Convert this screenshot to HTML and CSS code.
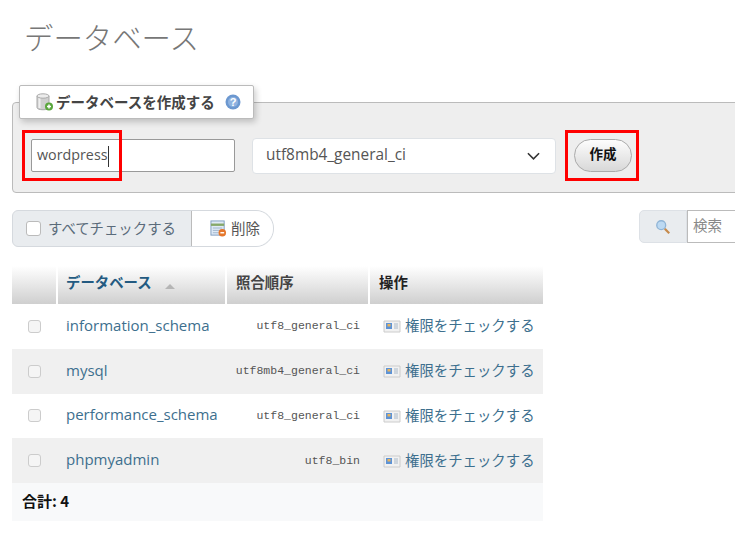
FILE: index.html
```html
<!DOCTYPE html>
<html lang="ja">
<head>
<meta charset="utf-8">
<title>データベース</title>
<link rel="stylesheet" href="styles.css">
</head>
<body>
<main class="page">
  <h1 class="title">データベース</h1>

  <form class="create-panel">
    <div class="legend">
      <svg class="ico-db" viewBox="0 0 18 18" width="18" height="18"><path d="M1 3v11.500c0 3 12 3 12 0V3z" fill="#cfcfcf" stroke="#a8a8a8"/><path d="M3.500 5v10" stroke="#f0f0f0" stroke-width="2"/><ellipse cx="7" cy="3" rx="6" ry="2.200" fill="#ececec" stroke="#aaa"/><circle cx="13" cy="13.500" r="4" fill="#5aa63c"/><path d="M11 13.500h4M13 11.500v4" stroke="#fff" stroke-width="1.500"/></svg>
      <span class="legend-text">データベースを作成する</span>
      <svg class="ico-help" viewBox="0 0 16 16" width="16" height="16"><circle cx="8" cy="8" r="7.500" fill="#6c98d0"/><circle cx="8" cy="8" r="5" fill="#8fb3e0"/><text x="8" y="11.500" text-anchor="middle" class="help-q">?</text></svg>
    </div>
    <div class="create-row">
      <div class="name-input">wordpress<span class="caret"></span></div>
      <div class="select"><span class="select-text">utf8mb4_general_ci</span>
        <svg viewBox="0 0 14 8" width="13" height="8"><path d="M1 1l6 6 6-6" fill="none" stroke="#333" stroke-width="1.700"/></svg>
      </div>
      <div class="btn-create">作成</div>
    </div>
    <span class="mark mark-name"></span>
    <span class="mark mark-btn"></span>
  </form>

  <div class="toolbar">
    <div class="bulk">
      <label class="check-all"><span class="box"></span>すべてチェックする</label>
      <div class="del">
        <svg viewBox="0 0 18 18" width="17" height="17"><rect x="1" y="1" width="14" height="15" fill="#dfeaf6" stroke="#7d9cc0"/><path d="M1 5h14" stroke="#86a86a" stroke-width="2.500"/><path d="M3 8.500h10M3 11h10M3 13.500h6" stroke="#9db3cb"/><circle cx="13" cy="13.500" r="4" fill="#e5772b"/><path d="M11 13.500h4" stroke="#fff" stroke-width="1.500"/></svg>
        <span class="del-text">削除</span>
      </div>
    </div>
    <div class="search">
      <div class="search-icon"><svg viewBox="0 0 18 18" width="16" height="16"><circle cx="7" cy="7" r="5" fill="#bcd9f2" stroke="#8fb4d6" stroke-width="1.500"/><path d="M11 11l5 5" stroke="#c68a4c" stroke-width="2.500"/></svg></div>
      <div class="search-input">検索</div>
    </div>
  </div>

  <table class="db-table">
    <colgroup><col class="c1"><col class="c2"><col class="c3"><col class="c4"></colgroup>
    <thead>
      <tr><th></th><th class="th-link th-db">データベース<span class="sort"></span></th><th class="th-link th-coll">照合順序</th><th>操作</th></tr>
    </thead>
    <tbody>
      <tr><td class="td-check"><span class="rowbox"></span></td><td><a class="link">information_schema</a></td><td class="coll">utf8_general_ci</td><td><a class="link priv"><svg class="ico-priv" viewBox="0 0 18 14" width="18" height="14"><path d="M1 2h16v11H1z" fill="#f1f1f1" stroke="#ccc"/><rect x="3" y="4" width="6" height="6" fill="#5d93d6"/><rect x="4.500" y="5" width="3" height="2.500" fill="#e9b35b"/><path d="M11 5h4M11 7h4M11 9h4" stroke="#a8b8c8"/></svg>権限をチェックする</a></td></tr>
      <tr><td class="td-check"><span class="rowbox"></span></td><td><a class="link">mysql</a></td><td class="coll">utf8mb4_general_ci</td><td><a class="link priv"><svg class="ico-priv" viewBox="0 0 18 14" width="18" height="14"><path d="M1 2h16v11H1z" fill="#f1f1f1" stroke="#ccc"/><rect x="3" y="4" width="6" height="6" fill="#5d93d6"/><rect x="4.500" y="5" width="3" height="2.500" fill="#e9b35b"/><path d="M11 5h4M11 7h4M11 9h4" stroke="#a8b8c8"/></svg>権限をチェックする</a></td></tr>
      <tr><td class="td-check"><span class="rowbox"></span></td><td><a class="link">performance_schema</a></td><td class="coll">utf8_general_ci</td><td><a class="link priv"><svg class="ico-priv" viewBox="0 0 18 14" width="18" height="14"><path d="M1 2h16v11H1z" fill="#f1f1f1" stroke="#ccc"/><rect x="3" y="4" width="6" height="6" fill="#5d93d6"/><rect x="4.500" y="5" width="3" height="2.500" fill="#e9b35b"/><path d="M11 5h4M11 7h4M11 9h4" stroke="#a8b8c8"/></svg>権限をチェックする</a></td></tr>
      <tr><td class="td-check"><span class="rowbox"></span></td><td><a class="link">phpmyadmin</a></td><td class="coll">utf8_bin</td><td><a class="link priv"><svg class="ico-priv" viewBox="0 0 18 14" width="18" height="14"><path d="M1 2h16v11H1z" fill="#f1f1f1" stroke="#ccc"/><rect x="3" y="4" width="6" height="6" fill="#5d93d6"/><rect x="4.500" y="5" width="3" height="2.500" fill="#e9b35b"/><path d="M11 5h4M11 7h4M11 9h4" stroke="#a8b8c8"/></svg>権限をチェックする</a></td></tr>
    </tbody>
    <tfoot>
      <tr><td colspan="4" class="total">合計: 4</td></tr>
    </tfoot>
  </table>
</main>
</body>
</html>
```

FILE: styles.css
```css
html, body {
  margin: 0;
  padding: 0;
  background: #fff;
  overflow: hidden;
  height: 539px;
}
body {
  font-family: "Open Sans", "Noto Sans CJK JP", sans-serif;
  color: #444;
  font-size: 14px;
}
.page {
  width: 780px;
  padding: 13px 0 0 12px;
}
.title {
  margin: 0 0 0 12px;
  height: 46px;
  font-size: 29.400px;
  line-height: 46px;
  font-weight: 300;
  color: #777;
  font-family: "Noto Sans CJK JP", sans-serif;
}
.create-panel {
  position: relative;
  box-sizing: border-box;
  margin-top: 43px;
  height: 91px;
  background: #eee;
  border: 1px solid #bbb;
  border-radius: 4px;
  padding: 35px 0 0 18px;
}
.legend {
  position: absolute;
  left: 6px;
  top: -18px;
  box-sizing: border-box;
  width: 235px;
  height: 34px;
  background: #fff;
  border: 1px solid #bbb;
  border-radius: 2px;
  box-shadow: 2px 3px 6px rgba(0, 0, 0, .2);
  display: flex;
  align-items: center;
  padding-left: 16px;
  color: #444;
}
.legend-text {
  font-size: 14.500px;
  font-weight: 700;
  margin-left: 2px;
  padding-bottom: 2px;
  white-space: nowrap;
  color: #444;
  font-family: "Noto Sans CJK JP", sans-serif;
}
.ico-help {
  margin-left: 10px;
}
.help-q {
  font: 700 11px "Liberation Sans", sans-serif;
  fill: #fff;
}
.create-row {
  display: flex;
  align-items: flex-start;
  height: 36px;
}
.name-input {
  box-sizing: border-box;
  width: 204px;
  height: 33px;
  margin-top: 1px;
  background: #fff;
  border: 1px solid #999;
  border-radius: 2px;
  line-height: 29px;
  padding-left: 5px;
  font-size: 14.300px;
  color: #555;
}
.caret {
  display: inline-block;
  width: 1px;
  height: 21px;
  background: #333;
  vertical-align: middle;
}
.select {
  box-sizing: border-box;
  width: 304px;
  height: 36px;
  margin-left: 17px;
  background: #fff;
  border: 1px solid #dee2e6;
  border-radius: 4px;
  display: flex;
  align-items: center;
  justify-content: space-between;
  padding: 0 15px 0 13px;
  font-size: 15.400px;
  color: #555;
}
.select-text {
  padding-bottom: 3px;
}
.btn-create {
  box-sizing: border-box;
  width: 58px;
  height: 33px;
  margin: 1px 0 0 18px;
  border: 1px solid #aaa;
  border-radius: 17px;
  background: linear-gradient(#fdfdfd, #d8d8d8);
  color: #111;
  text-align: center;
  line-height: 27px;
  font-size: 13.500px;
  font-weight: 700;
  font-family: "Noto Sans CJK JP", sans-serif;
}
.mark {
  position: absolute;
  box-sizing: border-box;
  border: 3px solid #f00;
}
.mark-name {
  left: 9px;
  top: 27px;
  width: 100px;
  height: 51px;
}
.mark-btn {
  left: 552px;
  top: 27px;
  width: 74px;
  height: 51px;
}
.toolbar {
  display: flex;
  justify-content: space-between;
  margin-top: 17px;
  height: 37px;
}
.bulk {
  display: flex;
  box-sizing: border-box;
  height: 37px;
  width: 262px;
  border: 1px solid #d5d9de;
  border-radius: 6px 18px 18px 6px;
  background: #e9ecef;
}
.check-all {
  display: flex;
  align-items: center;
  width: 178px;
  padding: 0 0 3px 13px;
  box-sizing: border-box;
  color: #5a6b7a;
  font-size: 14.400px;
  white-space: nowrap;
  font-family: "Noto Sans CJK JP", sans-serif;
}
.box {
  box-sizing: border-box;
  width: 15px;
  height: 15px;
  margin: 3px 7px 0 0;
  background: #fff;
  border: 1px solid #bbb;
  border-radius: 3px;
}
.del {
  flex: 1;
  display: flex;
  align-items: center;
  gap: 4px;
  padding-left: 18px;
  background: #fff;
  border-left: 1px solid #bbb;
  border-radius: 0 18px 18px 0;
  color: #555;
  font-size: 14.500px;
  font-family: "Noto Sans CJK JP", sans-serif;
}
.del-text {
  padding-bottom: 3px;
}
.search {
  display: flex;
  height: 33px;
  width: 141px;
  margin-right: 12px;
}
.search-icon {
  box-sizing: border-box;
  width: 48px;
  background: #e9ecef;
  border: 1px solid #dde1e6;
  border-radius: 5px 0 0 5px;
  display: flex;
  align-items: center;
  justify-content: center;
}
.search-input {
  flex: 1;
  box-sizing: border-box;
  border: 1px solid #bbb;
  background: #fff;
  padding-left: 5px;
  line-height: 28px;
  font-size: 14.500px;
  color: #888;
  font-family: "Noto Sans CJK JP", sans-serif;
}
.db-table {
  margin-top: 19px;
  width: 531px;
  table-layout: fixed;
  border-collapse: collapse;
}
.c1 { width: 45px; }
.c2 { width: 169px; }
.c3 { width: 143px; }
.c4 { width: 174px; }
th {
  box-sizing: border-box;
  height: 38px;
  padding: 0 0 7px 9px;
  text-align: left;
  background: linear-gradient(#fff, #cfcfcf);
  border-left: 2px solid #fff;
  font-size: 14.400px;
  font-weight: 700;
  color: #222;
  font-family: "Noto Sans CJK JP", sans-serif;
}
th:first-child { border-left: 0; }
.th-link { color: #235a81; }
.th-db { padding-left: 8px; }
.th-coll { color: #444; }
.sort {
  display: inline-block;
  margin: 5px 0 0 13px;
  vertical-align: middle;
  border: 5px solid transparent;
  border-top: 0;
  border-bottom: 5px solid #b5b5b5;
}
td {
  box-sizing: border-box;
  height: 44.750px;
  padding: 0 0 3px 9px;
  white-space: nowrap;
  font-size: 15px;
}
tbody tr:nth-child(even) td { background: #f0f0f0; }
.td-check {
  padding-bottom: 0;
}
.rowbox {
  display: block;
  box-sizing: border-box;
  width: 13px;
  height: 13px;
  margin-left: 7px;
  background: #f5f5f5;
  border: 1px solid #ccc;
  border-radius: 3px;
}
.link {
  color: #3d6f8e;
}
.coll {
  text-align: right;
  padding: 0 9px 1px 0;
  font: 11.500px "Liberation Mono", monospace;
  color: #555;
}
.priv {
  display: flex;
  align-items: center;
  gap: 4px;
  margin-left: 5px;
  font-size: 14.400px;
  font-family: "Noto Sans CJK JP", sans-serif;
}
.ico-priv {
  margin-top: 3px;
}
.total {
  height: 38px;
  background: #f8f9fa;
  font-weight: 700;
  color: #111;
  font-size: 15px;
  font-family: "Noto Sans CJK JP", sans-serif;
  padding: 0 0 3px 10px;
}
```
